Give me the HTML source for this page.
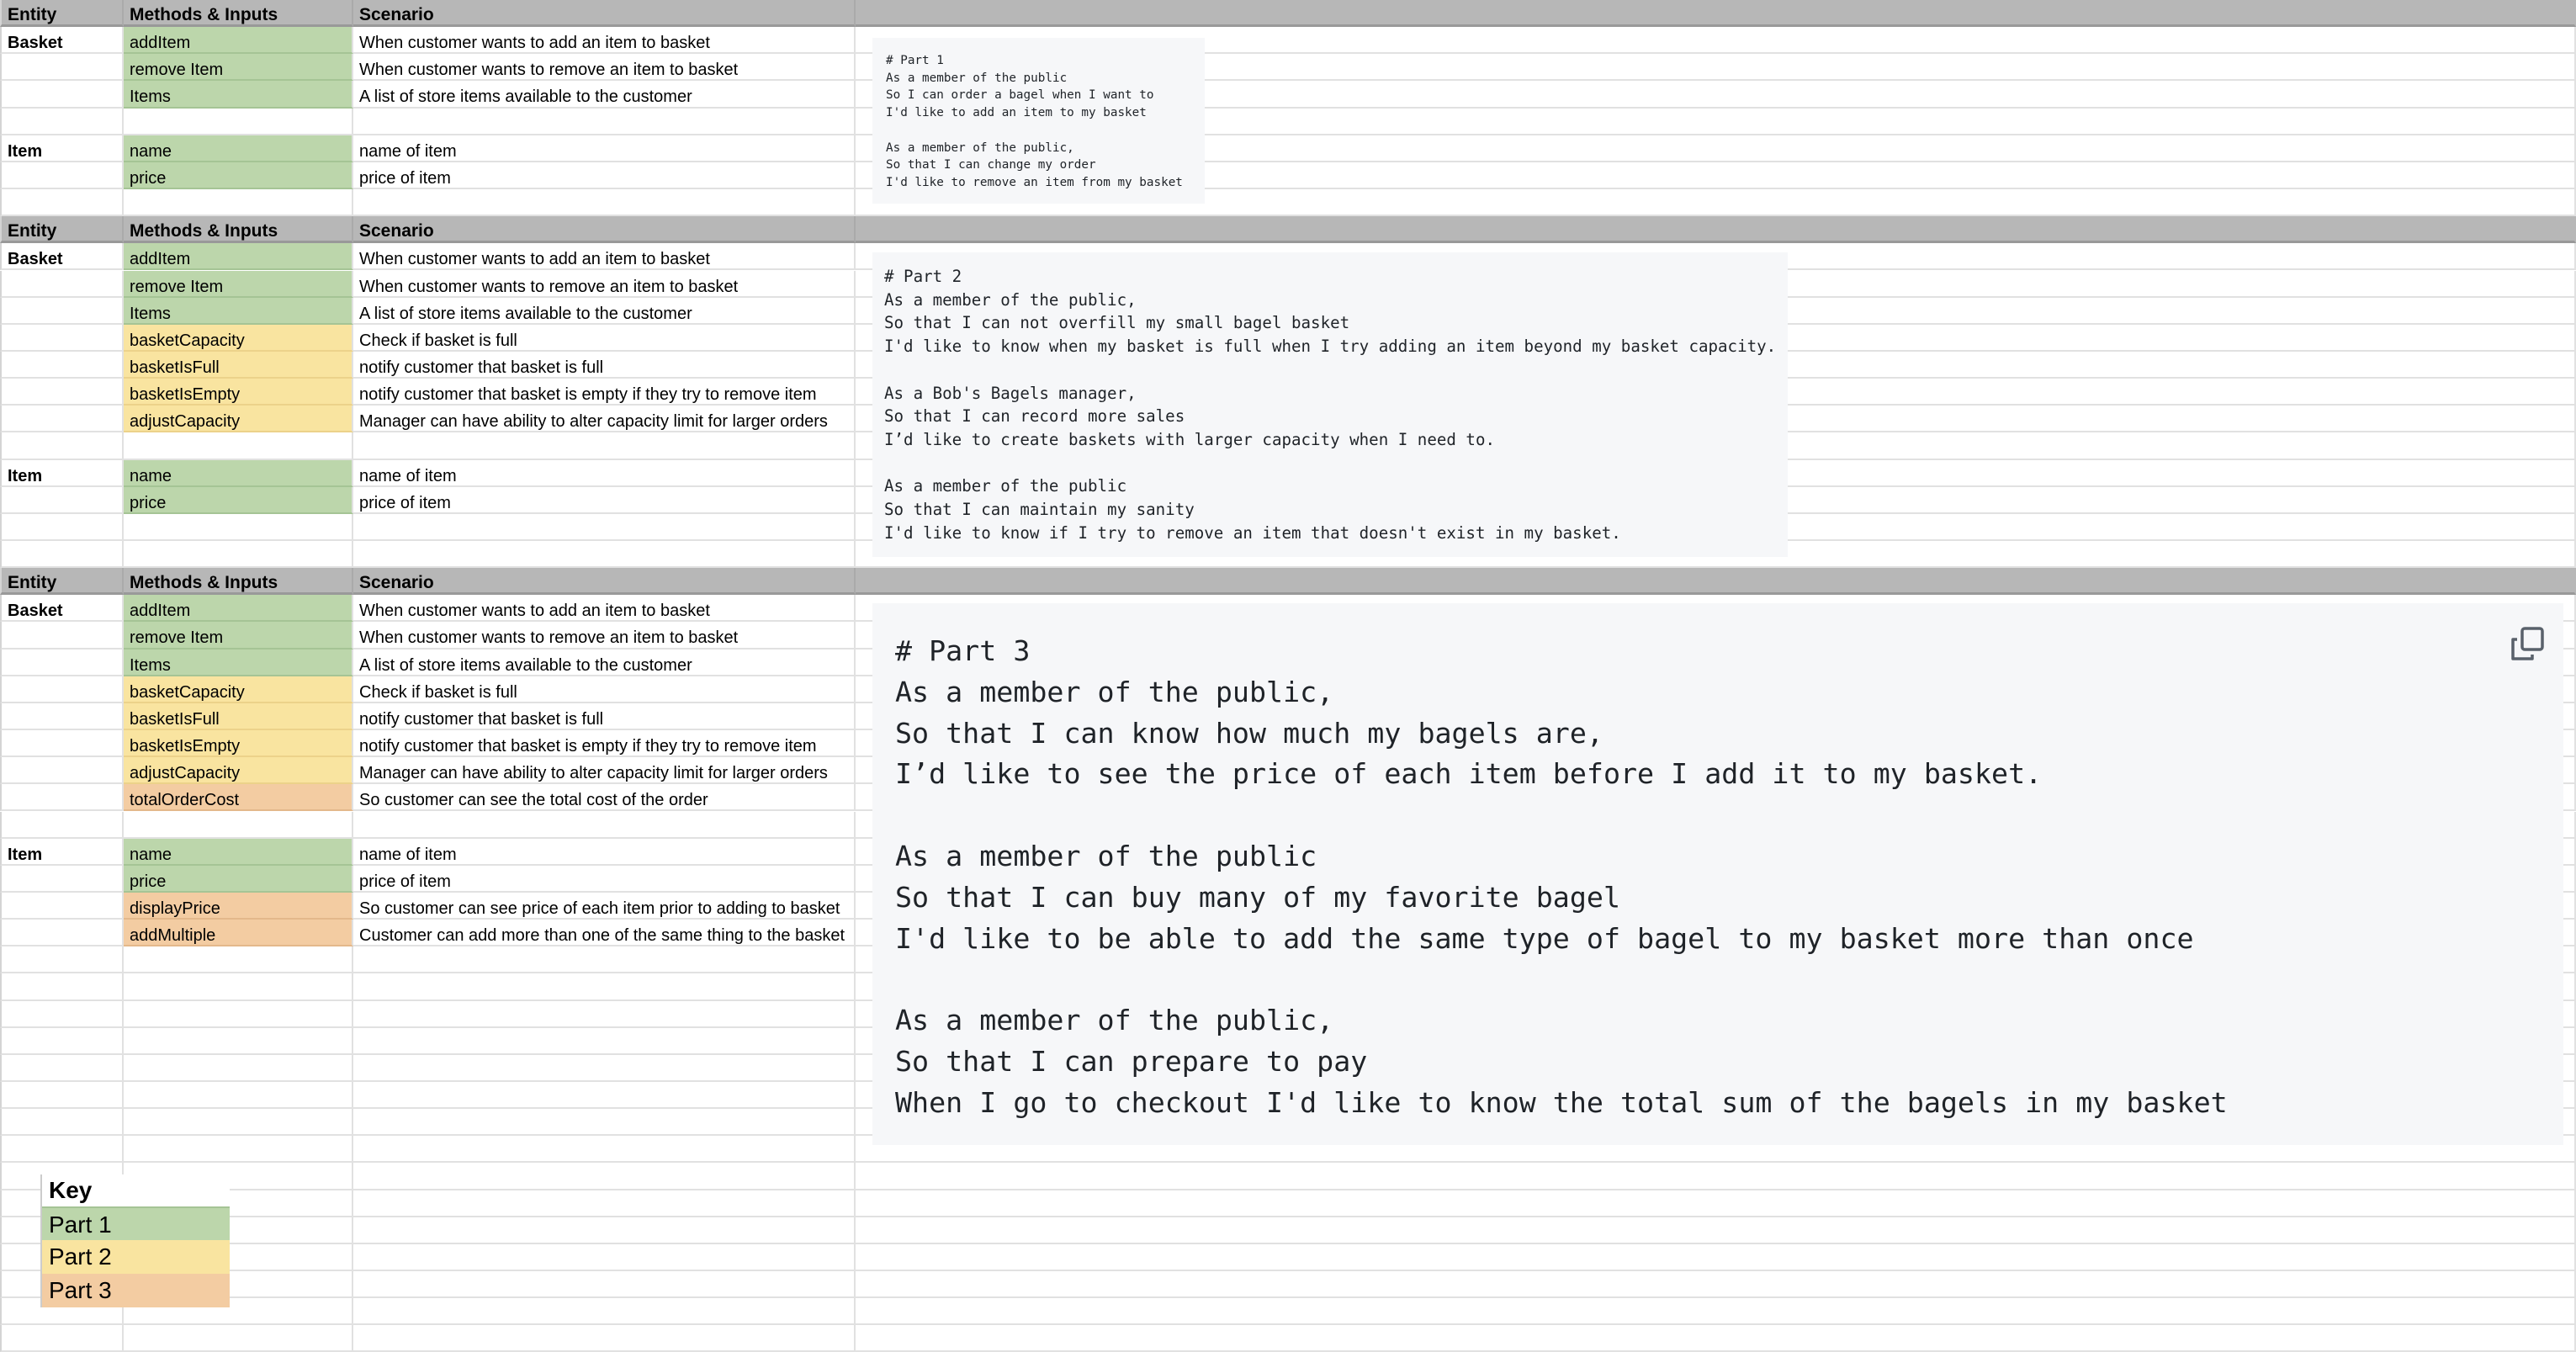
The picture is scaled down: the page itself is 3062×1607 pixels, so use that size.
<!DOCTYPE html>
<html><head><meta charset="utf-8"><style>
*{margin:0;padding:0;box-sizing:border-box}
body{width:3062px;height:1606px;overflow:hidden;background:#fff;position:relative;font-family:"Liberation Sans",Arial,sans-serif;font-size:20px;color:#000}
.r{position:absolute;left:0;width:3062px;height:32.15px;display:flex}
.r>div{height:100%;border-right:2px solid #e1e1e1;border-bottom:2px solid #e1e1e1;padding-left:7px;line-height:38px;white-space:nowrap;overflow:hidden}
.a{width:147px;border-left:2px solid #d4d4d4}.b{width:273px}.c{width:597px}.d{flex:1}
.h>div{background:#b7b7b7;border-bottom:3px solid #999;border-right-color:#b7b7b7;font-weight:bold;font-size:21px;line-height:36px}
.h>.a{border-right-color:#aaa}.h>.b{border-right-color:#aaa}.h>.c{border-right-color:#aaa}
.bo{font-weight:bold}
.g{background:#bcd6ab!important;border-bottom-color:#a5c495!important}
.y{background:#f9e4a0!important;border-bottom-color:#ecd28a!important}
.o{background:#f3cca2!important;border-bottom-color:#e3b88b!important}
.code{position:absolute;background:#f6f7f9;font-family:"DejaVu Sans Mono","Liberation Mono",monospace;white-space:pre;color:#1f2328}
.key{position:absolute;left:48px;width:225px;border-left:2px solid #ccc}
.key div{height:40px;line-height:40px;padding-left:8px;font-size:28px}
</style></head><body>
<div class="r h" style="top:0"><div class="a">Entity</div><div class="b">Methods &amp; Inputs</div><div class="c">Scenario</div><div class="d"></div></div>
<div class="r" style="top:32.15px"><div class="a bo">Basket</div><div class="b g">addItem</div><div class="c">When customer wants to add an item to basket</div><div class="d"></div></div>
<div class="r" style="top:64.3px"><div class="a"></div><div class="b g">remove Item</div><div class="c">When customer wants to remove an item to basket</div><div class="d"></div></div>
<div class="r" style="top:96.45px"><div class="a"></div><div class="b g">Items</div><div class="c">A list of store items available to the customer</div><div class="d"></div></div>
<div class="r" style="top:128.6px"><div class="a"></div><div class="b"></div><div class="c"></div><div class="d"></div></div>
<div class="r" style="top:160.75px"><div class="a bo">Item</div><div class="b g">name</div><div class="c">name of item</div><div class="d"></div></div>
<div class="r" style="top:192.9px"><div class="a"></div><div class="b g">price</div><div class="c">price of item</div><div class="d"></div></div>
<div class="r" style="top:225.05px"><div class="a"></div><div class="b"></div><div class="c"></div><div class="d"></div></div>
<div class="r h" style="top:257.2px"><div class="a">Entity</div><div class="b">Methods &amp; Inputs</div><div class="c">Scenario</div><div class="d"></div></div>
<div class="r" style="top:289.35px"><div class="a bo">Basket</div><div class="b g">addItem</div><div class="c">When customer wants to add an item to basket</div><div class="d"></div></div>
<div class="r" style="top:321.5px"><div class="a"></div><div class="b g">remove Item</div><div class="c">When customer wants to remove an item to basket</div><div class="d"></div></div>
<div class="r" style="top:353.65px"><div class="a"></div><div class="b g">Items</div><div class="c">A list of store items available to the customer</div><div class="d"></div></div>
<div class="r" style="top:385.8px"><div class="a"></div><div class="b y">basketCapacity</div><div class="c">Check if basket is full</div><div class="d"></div></div>
<div class="r" style="top:417.95px"><div class="a"></div><div class="b y">basketIsFull</div><div class="c">notify customer that basket is full</div><div class="d"></div></div>
<div class="r" style="top:450.1px"><div class="a"></div><div class="b y">basketIsEmpty</div><div class="c">notify customer that basket is empty if they try to remove item</div><div class="d"></div></div>
<div class="r" style="top:482.25px"><div class="a"></div><div class="b y">adjustCapacity</div><div class="c">Manager can have ability to alter capacity limit for larger orders</div><div class="d"></div></div>
<div class="r" style="top:514.4px"><div class="a"></div><div class="b"></div><div class="c"></div><div class="d"></div></div>
<div class="r" style="top:546.55px"><div class="a bo">Item</div><div class="b g">name</div><div class="c">name of item</div><div class="d"></div></div>
<div class="r" style="top:578.7px"><div class="a"></div><div class="b g">price</div><div class="c">price of item</div><div class="d"></div></div>
<div class="r" style="top:610.85px"><div class="a"></div><div class="b"></div><div class="c"></div><div class="d"></div></div>
<div class="r" style="top:643px"><div class="a"></div><div class="b"></div><div class="c"></div><div class="d"></div></div>
<div class="r h" style="top:675.15px"><div class="a">Entity</div><div class="b">Methods &amp; Inputs</div><div class="c">Scenario</div><div class="d"></div></div>
<div class="r" style="top:707.3px"><div class="a bo">Basket</div><div class="b g">addItem</div><div class="c">When customer wants to add an item to basket</div><div class="d"></div></div>
<div class="r" style="top:739.45px"><div class="a"></div><div class="b g">remove Item</div><div class="c">When customer wants to remove an item to basket</div><div class="d"></div></div>
<div class="r" style="top:771.6px"><div class="a"></div><div class="b g">Items</div><div class="c">A list of store items available to the customer</div><div class="d"></div></div>
<div class="r" style="top:803.75px"><div class="a"></div><div class="b y">basketCapacity</div><div class="c">Check if basket is full</div><div class="d"></div></div>
<div class="r" style="top:835.9px"><div class="a"></div><div class="b y">basketIsFull</div><div class="c">notify customer that basket is full</div><div class="d"></div></div>
<div class="r" style="top:868.05px"><div class="a"></div><div class="b y">basketIsEmpty</div><div class="c">notify customer that basket is empty if they try to remove item</div><div class="d"></div></div>
<div class="r" style="top:900.2px"><div class="a"></div><div class="b y">adjustCapacity</div><div class="c">Manager can have ability to alter capacity limit for larger orders</div><div class="d"></div></div>
<div class="r" style="top:932.35px"><div class="a"></div><div class="b o">totalOrderCost</div><div class="c">So customer can see the total cost of the order</div><div class="d"></div></div>
<div class="r" style="top:964.5px"><div class="a"></div><div class="b"></div><div class="c"></div><div class="d"></div></div>
<div class="r" style="top:996.65px"><div class="a bo">Item</div><div class="b g">name</div><div class="c">name of item</div><div class="d"></div></div>
<div class="r" style="top:1028.8px"><div class="a"></div><div class="b g">price</div><div class="c">price of item</div><div class="d"></div></div>
<div class="r" style="top:1060.95px"><div class="a"></div><div class="b o">displayPrice</div><div class="c">So customer can see price of each item prior to adding to basket</div><div class="d"></div></div>
<div class="r" style="top:1093.1px"><div class="a"></div><div class="b o">addMultiple</div><div class="c">Customer can add more than one of the same thing to the basket</div><div class="d"></div></div>
<div class="r" style="top:1125.25px"><div class="a"></div><div class="b"></div><div class="c"></div><div class="d"></div></div>
<div class="r" style="top:1157.4px"><div class="a"></div><div class="b"></div><div class="c"></div><div class="d"></div></div>
<div class="r" style="top:1189.55px"><div class="a"></div><div class="b"></div><div class="c"></div><div class="d"></div></div>
<div class="r" style="top:1221.7px"><div class="a"></div><div class="b"></div><div class="c"></div><div class="d"></div></div>
<div class="r" style="top:1253.85px"><div class="a"></div><div class="b"></div><div class="c"></div><div class="d"></div></div>
<div class="r" style="top:1286px"><div class="a"></div><div class="b"></div><div class="c"></div><div class="d"></div></div>
<div class="r" style="top:1318.15px"><div class="a"></div><div class="b"></div><div class="c"></div><div class="d"></div></div>
<div class="r" style="top:1350.3px"><div class="a"></div><div class="b"></div><div class="c"></div><div class="d"></div></div>
<div class="r" style="top:1382.45px"><div class="a"></div><div class="b"></div><div class="c"></div><div class="d"></div></div>
<div class="r" style="top:1414.6px"><div class="a"></div><div class="b"></div><div class="c"></div><div class="d"></div></div>
<div class="r" style="top:1446.75px"><div class="a"></div><div class="b"></div><div class="c"></div><div class="d"></div></div>
<div class="r" style="top:1478.9px"><div class="a"></div><div class="b"></div><div class="c"></div><div class="d"></div></div>
<div class="r" style="top:1511.05px"><div class="a"></div><div class="b"></div><div class="c"></div><div class="d"></div></div>
<div class="r" style="top:1543.2px"><div class="a"></div><div class="b"></div><div class="c"></div><div class="d"></div></div>
<div class="r" style="top:1575.35px"><div class="a"></div><div class="b"></div><div class="c"></div><div class="d"></div></div>

<div class="code" style="left:1037px;top:45px;width:395px;height:197px;padding:17px 0 0 16px;font-size:14.3px;line-height:20.7px"># Part 1
As a member of the public
So I can order a bagel when I want to
I'd like to add an item to my basket

As a member of the public,
So that I can change my order
I'd like to remove an item from my basket</div>

<div class="code" style="left:1037px;top:300px;width:1088px;height:362px;padding:15px 0 0 14px;font-size:19.15px;line-height:27.7px"># Part 2
As a member of the public,
So that I can not overfill my small bagel basket
I'd like to know when my basket is full when I try adding an item beyond my basket capacity.

As a Bob's Bagels manager,
So that I can record more sales
I’d like to create baskets with larger capacity when I need to.

As a member of the public
So that I can maintain my sanity
I'd like to know if I try to remove an item that doesn't exist in my basket.</div>

<div class="code" style="left:1037px;top:717px;width:2010px;height:644px;padding:33px 0 0 27px;font-size:33.3px;line-height:48.8px"># Part 3
As a member of the public,
So that I can know how much my bagels are,
I’d like to see the price of each item before I add it to my basket.

As a member of the public
So that I can buy many of my favorite bagel
I'd like to be able to add the same type of bagel to my basket more than once

As a member of the public,
So that I can prepare to pay
When I go to checkout I'd like to know the total sum of the bagels in my basket</div>
<svg style="position:absolute;left:2980px;top:742px" width="48" height="48" viewBox="0 0 48 48" fill="none" stroke="#59616b" stroke-width="3.5" stroke-linejoin="round"><rect x="18" y="5" width="24" height="25" rx="3"/><path d="M12 18 H7 V41 H30 V36"/></svg>

<div class="key" style="top:1396px">
<div style="background:#fff;font-weight:bold;height:38px;line-height:38px">Key</div>
<div style="background:#bcd6ab;border-top:2px solid #a5c495">Part 1</div>
<div style="background:#f9e4a0">Part 2</div>
<div style="background:#f3cca2">Part 3</div>
</div>
</body></html>
